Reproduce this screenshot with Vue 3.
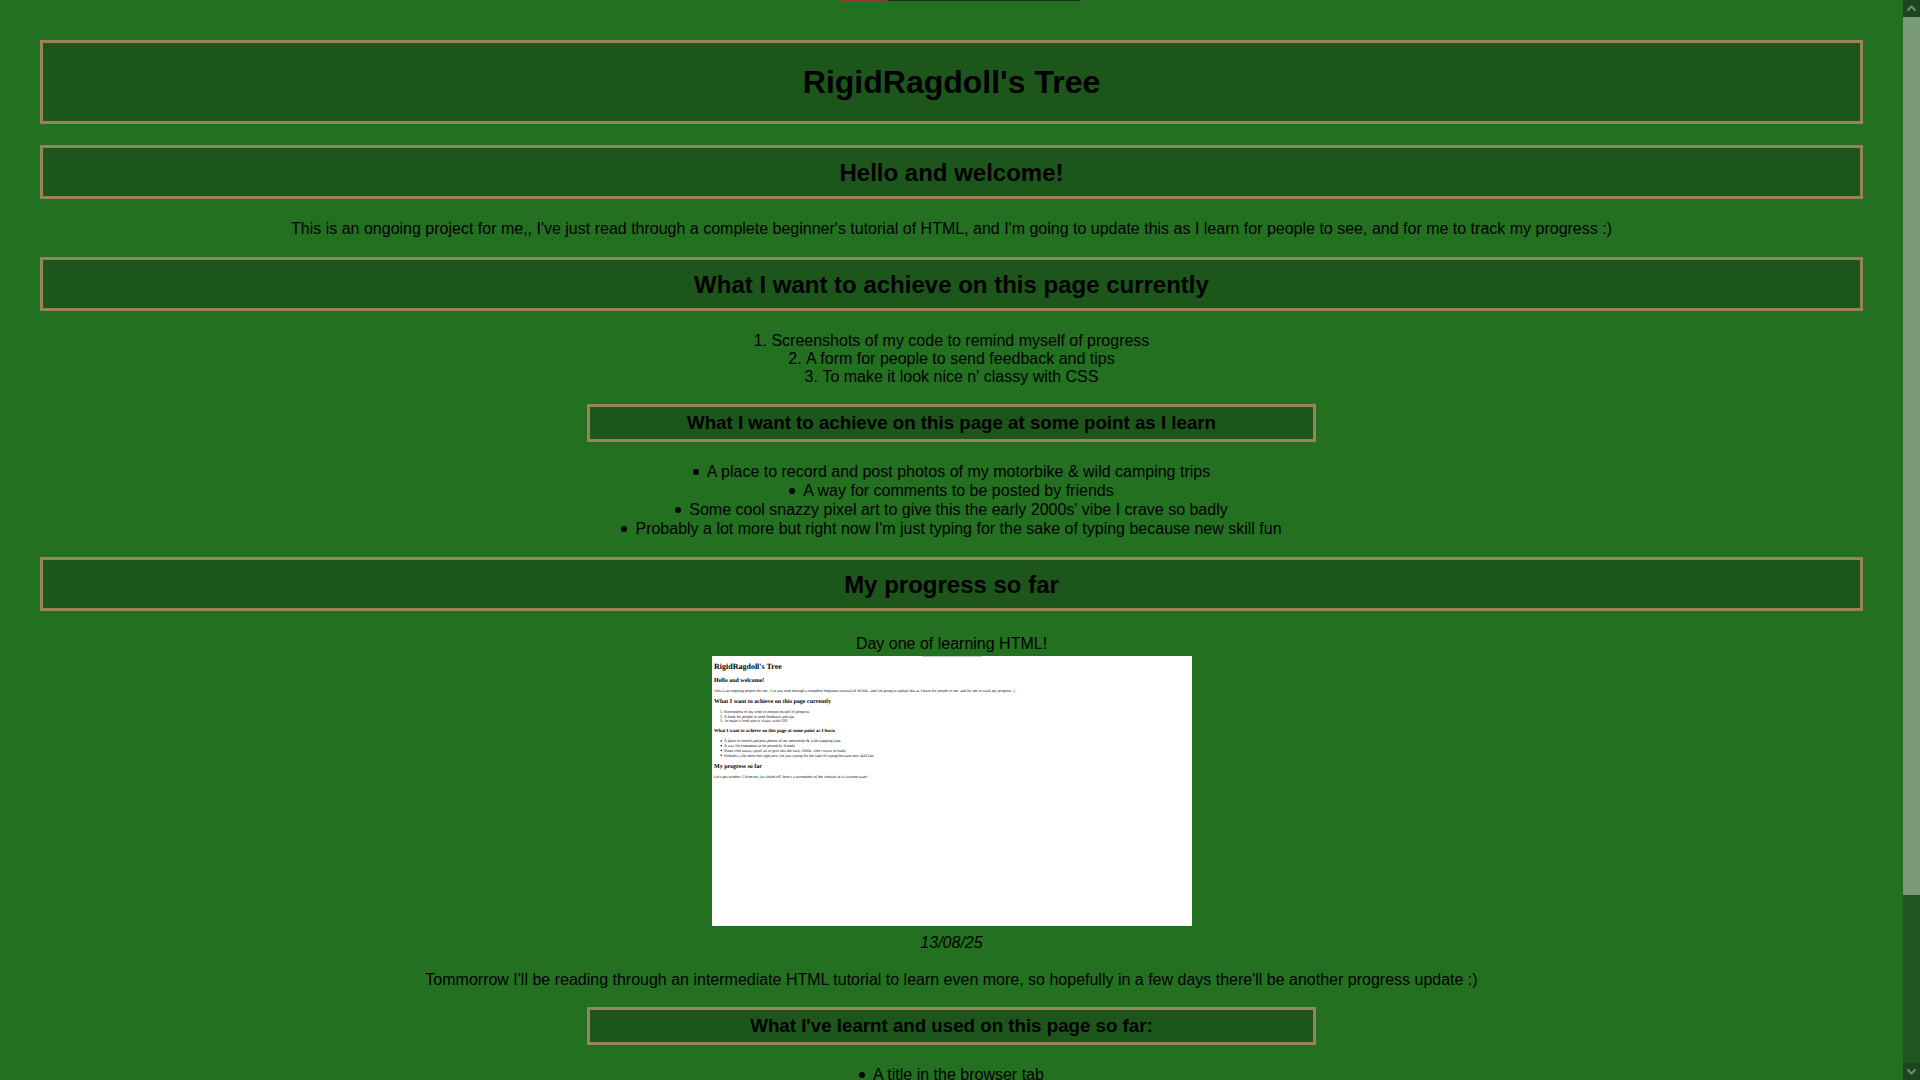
<script setup>
const currentGoals = [
  'Screenshots of my code to remind myself of progress',
  'A form for people to send feedback and tips',
  "To make it look nice n' classy with CSS",
]
const futureGoals = [
  'A place to record and post photos of my motorbike & wild camping trips',
  'A way for comments to be posted by friends',
  "Some cool snazzy pixel art to give this the early 2000s' vibe I crave so badly",
  "Probably a lot more but right now I'm just typing for the sake of typing because new skill fun",
]
const learnt = ['A title in the browser tab']
</script>

<template>
  <div class="window">
    <main class="page">
      <h1 class="title">RigidRagdoll's Tree</h1>

      <h2>Hello and welcome!</h2>
      <p>This is an ongoing project for me,, I've just read through a complete beginner's tutorial of HTML, and I'm going to update this as I learn for people to see, and for me to track my progress :)</p>

      <h2>What I want to achieve on this page currently</h2>
      <ol>
        <li v-for="goal in currentGoals" :key="goal">{{ goal }}</li>
      </ol>

      <h3>What I want to achieve on this page at some point as I learn</h3>
      <ul>
        <li v-for="goal in futureGoals" :key="goal">{{ goal }}</li>
      </ul>

      <h2>My progress so far</h2>
      <figure>
        <span>Day one of learning HTML!</span>
        <svg class="shot" viewBox="0 0 1920 1080" role="img" aria-label="The page on day one">
          <rect width="1920" height="1080" fill="#fff" />
          <rect x="840" width="240" height="4" fill="#c9cfc4" />
          <text class="s1" x="8" y="52">RigidRagdoll's Tree</text>
          <text class="s2" x="8" y="104">Hello and welcome!</text>
          <text x="8" y="145">This is an ongoing project for me,, I've just read through a complete beginners tutorial of HTML, and I'm going to update this as I learn for people to see, and for me to track my progress :)</text>
          <text class="s2" x="8" y="189">What I want to achieve on this page currently</text>
          <g v-for="(goal, i) in currentGoals" :key="goal">
            <text x="32" :y="229 + i * 18">{{ i + 1 }}.</text>
            <text x="48" :y="229 + i * 18">{{ goal }}</text>
          </g>
          <text class="s3" x="8" y="305">What I want to achieve on this page at some point as I learn</text>
          <g v-for="(goal, i) in futureGoals" :key="goal">
            <circle cx="37" :cy="340 + i * 19" r="3" />
            <text x="48" :y="345 + i * 19">{{ goal }}</text>
          </g>
          <text class="s2" x="8" y="448">My progress so far</text>
          <text x="8" y="488">Let's get number 1 from my list ticked off, here's a screenshot of the website in it's current state!</text>
        </svg>
        <figcaption>13/08/25</figcaption>
      </figure>
      <p>Tommorrow I'll be reading through an intermediate HTML tutorial to learn even more, so hopefully in a few days there'll be another progress update :)</p>

      <h3>What I've learnt and used on this page so far:</h3>
      <ul>
        <li v-for="item in learnt" :key="item">{{ item }}</li>
      </ul>
    </main>

    <div class="scrollbar">
      <button type="button" aria-label="Scroll up">
        <svg viewBox="0 0 17 17"><path d="M4.5 10.5 8.5 6.5l4 4" /></svg>
      </button>
      <div class="track"><div class="thumb"></div></div>
      <button type="button" aria-label="Scroll down">
        <svg viewBox="0 0 17 17"><path d="M4.5 6.5l4 4 4-4" /></svg>
      </button>
    </div>

    <div class="strip"><div class="strip-fill"></div></div>
  </div>
</template>

<style>
body {
  margin: 0;
  background: #237021;
}
</style>

<style scoped>
.window {
  position: relative;
  display: grid;
  grid-template-columns: minmax(0, 1fr) 17px;
  height: 100vh;
  overflow: hidden;
  background: #237021;
  color: #000;
  font: 16px/18px "Liberation Sans", Arial, sans-serif;
  text-align: center;
}
.page {
  display: flow-root;
  min-height: 0;
  padding: 40px;
}
h1,
h2,
h3 {
  border: 3px solid #98835b;
  background: #1c561b;
  font-weight: bold;
}
h1 {
  margin: 0 0 21px;
  padding: 21px 0;
  font-size: 32px;
  line-height: 36px;
}
h2 {
  margin: 19px 0;
  padding: 11px 0 9px;
  font-size: 24px;
  line-height: 28px;
}
h3 {
  box-sizing: border-box;
  width: 40%;
  margin: 18px auto;
  padding: 5px 0;
  line-height: 22px;
}
p {
  margin: 19px 0 18px;
}
ol,
ul {
  padding: 0;
}
ol {
  margin: 21px 0 18px;
  list-style-position: inside;
}
ul {
  margin: 20px 0 19px;
  line-height: 19px;
  list-style: none;
}
ul li::before {
  content: "";
  display: inline-block;
  width: 6px;
  height: 6px;
  margin-right: 8px;
  border-radius: 50%;
  background: #000;
  vertical-align: 2px;
}
h2 + p {
  margin-top: 21px;
}
figure {
  display: flex;
  flex-direction: column;
  align-items: center;
  margin: 24px 0 19px;
}
.shot {
  width: 480px;
  margin: 3px 0 8px;
}
.shot text {
  font-family: "Liberation Serif", "Times New Roman", serif;
  font-size: 16px;
  text-rendering: geometricPrecision;
}
.shot .s1 {
  font-size: 32px;
  font-weight: bold;
}
.shot .s2 {
  font-size: 24px;
  font-weight: bold;
}
.shot .s3 {
  font-size: 19px;
  font-weight: bold;
}
figcaption {
  font-style: italic;
}
.scrollbar {
  display: flex;
  flex-direction: column;
  min-height: 0;
  height: 100vh;
}
.scrollbar button {
  width: 17px;
  height: 17px;
  padding: 0;
  border: 0;
  background: #1c451f;
}
.scrollbar svg {
  display: block;
  width: 17px;
  height: 17px;
  fill: none;
  stroke: #6d916e;
  stroke-width: 2;
}
.track {
  flex: 1;
  background: #1f5520;
}
.thumb {
  height: 83.9%;
  background: #7b9a7a;
}
.strip {
  position: absolute;
  top: 0;
  left: 50%;
  width: 241px;
  height: 1px;
  transform: translateX(-50%);
  background: #142d14;
}
.strip-fill {
  width: 20%;
  height: 1px;
  background: #943c44;
}
</style>
